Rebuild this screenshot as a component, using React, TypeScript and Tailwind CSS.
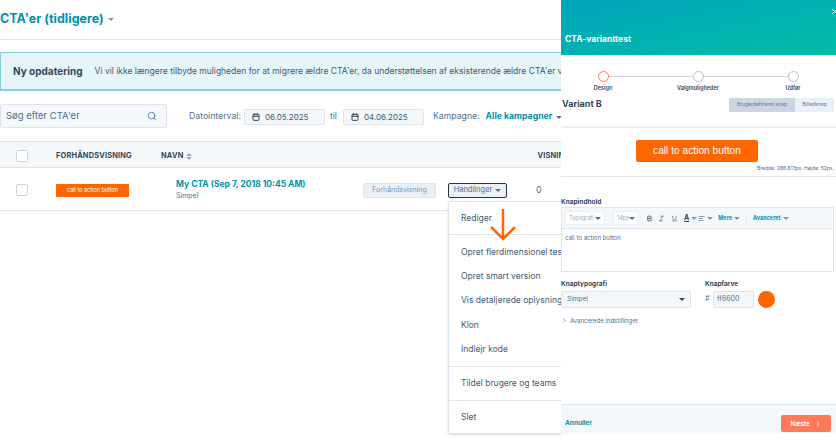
import React from 'react';
import { Search, Calendar, ChevronRight, X, Bold, Italic, Underline, AlignLeft } from 'lucide-react';

const Caret = ({ className = 'border-t-[#516f90]' }: { className?: string }) => (
  <span className={`inline-block w-0 h-0 border-x-[3px] border-x-transparent border-t-[3px] ${className}`}></span>
);

const DateField = ({ value }: { value: string }) => (
  <div className="w-[81px] h-[16px] shrink-0 flex items-center gap-[5px] pl-[7px] bg-[#f5f8fa] border border-[#dfe3eb] rounded-[2px]">
    <Calendar size={8} strokeWidth={3} className="text-[#33475b]" />
    <span className="text-[8px] text-[#425b76]">{value}</span>
  </div>
);

const menuItem = 'h-[24.25px] flex items-center pl-[12px] text-[8.5px] text-[#425b76] whitespace-nowrap';
const menuBlock = 'flex items-center pl-[12px] text-[8.5px] text-[#425b76]';

const ActionsMenu = () => (
  <div className="absolute left-[448px] top-[33px] w-[140px] h-[233px] bg-white border border-[#dfe3eb] shadow-sm">
    <div className={`${menuBlock} h-[33px] border-b border-[#dfe3eb]`}>Rediger</div>
    <div className="h-[132px] pt-[5px] border-b border-[#dfe3eb]">
      <div className={menuItem}>Opret flerdimensionel test</div>
      <div className={menuItem}>Opret smart version</div>
      <div className={menuItem}>Vis detaljerede oplysninger</div>
      <div className={menuItem}>Klon</div>
      <div className={menuItem}>Indlejr kode</div>
    </div>
    <div className={`${menuBlock} h-[34px] border-b border-[#dfe3eb]`}>Tildel brugere og teams</div>
    <div className={`${menuBlock} h-[33px]`}>Slet</div>
  </div>
);

const LeftPage = () => (
  <div className="relative w-[561px] shrink-0 overflow-hidden">
    <div className="h-[40px] flex items-center gap-[4px] border-b border-[#dfe3eb]">
      <h1 className="text-[12.5px] font-bold text-[#0091ae]">CTA&apos;er (tidligere)</h1>
      <Caret className="border-t-[#7c98b6]" />
    </div>

    <div className="mt-[12px] w-[600px] h-[39px] flex items-center gap-[12px] pl-[12px] bg-[#e5f5f8] border border-[#7fd1de] border-b-2 whitespace-nowrap">
      <span className="text-[10px] font-bold text-[#33475b]">Ny opdatering</span>
      <span className="text-[8.5px] text-[#425b76]">Vi vil ikke længere tilbyde muligheden for at migrere ældre CTA&apos;er, da understøttelsen af eksisterende ældre CTA&apos;er vil</span>
    </div>

    <div className="mt-[13px] h-[24px] flex items-center whitespace-nowrap">
      <div className="w-[167px] h-[24px] shrink-0 flex items-center justify-between pl-[5px] pr-[3px] bg-[#f5f8fa] border border-[#dfe3eb] rounded-[2px]">
        <span className="text-[9.5px] text-[#516f90]">Søg efter CTA&apos;er</span>
        <Search size={10} className="mr-[6px] text-[#516f90]" />
      </div>
      <div className="pt-[2px] flex items-center">
        <span className="ml-[22px] text-[8.7px] text-[#516f90]">Datointerval:</span>
        <div className="ml-[3px]"><DateField value="06.05.2025" /></div>
        <span className="ml-[5px] mr-[6px] text-[8.7px] text-[#516f90]">til</span>
        <DateField value="04.06.2025" />
        <span className="ml-[9px] text-[8.7px] text-[#516f90]">Kampagne:</span>
        <span className="ml-[6px] text-[8.7px] font-bold text-[#0091ae]">Alle kampagner</span>
        <span className="ml-[4px] flex"><Caret /></span>
      </div>
    </div>

    <div className="mt-[13px] w-[600px] h-[27px] pt-[3px] flex items-center bg-[#f5f8fa] border-y border-[#dfe3eb] text-[7.4px] font-bold tracking-wide text-[#33475b] whitespace-nowrap">
      <span className="ml-[16px] w-[12px] h-[12px] shrink-0 bg-white border border-[#cbd6e2] rounded-[2px]"></span>
      <span className="ml-[28px] w-[105px] shrink-0">FORHÅNDSVISNING</span>
      <span>NAVN</span>
      <span className="ml-[3px] flex flex-col gap-[1px]">
        <Caret className="rotate-180 border-t-[#99acc2]" />
        <Caret className="border-t-[#99acc2]" />
      </span>
      <span className="ml-[345px]">VISNINGER</span>
    </div>

    <div className="relative h-[43px] pt-[2px] flex items-center border-b border-[#dfe3eb] whitespace-nowrap">
      <span className="ml-[16px] w-[12px] h-[12px] shrink-0 bg-white border border-[#cbd6e2] rounded-[2px]"></span>
      <div className="ml-[28px] w-[73px] h-[13px] flex items-center justify-center bg-[#ff6600] rounded-[1px] text-[5.5px] text-white">call to action button</div>
      <div className="ml-[47px] w-[187px]">
        <div className="text-[8.5px] font-bold text-[#0091ae]">My CTA (Sep 7, 2018 10:45 AM)</div>
        <div className="text-[7px] text-[#516f90]">Simpel</div>
      </div>
      <div className="w-[73px] h-[15px] flex items-center justify-center bg-[#eaf0f6] border border-[#dfe3eb] rounded-[2px] text-[7px] text-[#7c98b6]">Forhåndsvisning</div>
      <div className="ml-[12px] w-[59px] h-[15px] flex items-center justify-center gap-[3px] bg-[#eaf0f6] border-[1.5px] border-[#253342] rounded-[2px] text-[7.5px] text-[#516f90]">
        Handlinger <Caret />
      </div>
      <span className="ml-[29px] text-[9px] text-[#516f90]">0</span>
      <ActionsMenu />
    </div>

    <svg className="absolute left-[489px] top-[208px]" width="28" height="34" viewBox="0 0 28 34" fill="none" stroke="#ff6600" strokeWidth="2.5">
      <path d="M14 1V31M2 19L14 31L26 19" />
    </svg>
  </div>
);

const Step = ({ label, active }: { label: string; active?: boolean }) => (
  <div className="w-[70px] flex flex-col items-center gap-[2px]">
    <span className={`z-10 w-[11px] h-[11px] rounded-full bg-white border ${active ? 'border-[#ff7a59]' : 'border-[#b0c1d4]'}`}></span>
    <span className="text-[5.5px] font-semibold text-[#33475b]">{label}</span>
  </div>
);

const RightPanel = () => (
  <div className="w-[275px] shrink-0 flex flex-col h-[434px] bg-white overflow-hidden">
    <div className="relative h-[55px] shrink-0 flex items-end pb-[9px] pl-[4px] bg-gradient-to-br from-[#00a4bd] to-[#00bda5]">
      <span className="text-[8.5px] font-bold text-white">CTA-varianttest</span>
      <X size={9} className="absolute right-[-3px] top-[7px] text-white" />
    </div>

    <div className="relative mt-[16px] h-[24px] shrink-0 pl-[7px] pr-[8px] flex justify-between">
      <div className="absolute left-[42px] right-[43px] top-[5px] h-px bg-[#cbd6e2]"></div>
      <Step label="Design" active />
      <Step label="Valgmuligheder" />
      <Step label="Udfør" />
    </div>

    <div className="mt-[3px] h-[14px] shrink-0 flex items-start justify-between pr-[2px]">
      <span className="ml-[1px] text-[9px] leading-[11px] font-bold text-[#33475b]">Variant B</span>
      <div className="flex h-[14px] text-[5px] text-[#5f7c9b]">
        <span className="w-[66px] flex items-center justify-center bg-[#cbd6e2] rounded-l-[1px]">Brugerdefineret knap</span>
        <span className="w-[39px] flex items-center justify-center bg-[#eaf0f6] rounded-r-[1px]">Billedknap</span>
      </div>
    </div>

    <div className="mt-[14px] border-t-2 border-[#eaf0f6] h-[50px] shrink-0 flex flex-col items-center">
      <div className="mt-[12px] mr-[3px] w-[122px] h-[22px] flex items-center justify-center bg-[#ff6600] rounded-[2px] text-[10.2px] text-white font-['Liberation_Sans',sans-serif]">call to action button</div>
      <span className="self-end mt-[3px] mr-[2px] text-[5px] leading-[7px] text-[#516f90]">Bredde: 286,813px. Højde: 52px.</span>
    </div>
    <div className="h-px shrink-0 bg-[#dfe3eb]"></div>

    <div className="mt-[20px] text-[6.5px] leading-[10px] font-bold text-[#33475b]">Knapindhold</div>
    <div className="mr-[2px] h-[65px] shrink-0 border border-[#dfe3eb]">
      <div className="h-[21px] flex items-center pl-[3px] bg-[#f5f8fa] border-b border-[#dfe3eb] text-[5.5px] text-[#516f90]">
        <span className="w-[40px] h-[14px] flex items-center justify-between px-[3px] bg-white border border-[#eaf0f6] text-[#99acc2]">Typografi <Caret /></span>
        <span className="ml-[8px] w-[26px] h-[14px] flex items-center justify-between px-[3px] bg-white border border-[#eaf0f6] text-[#99acc2]">14px <Caret /></span>
        <Bold size={7} strokeWidth={3} className="ml-[7px] text-[#425b76]" />
        <Italic size={7} className="ml-[5px] text-[#425b76]" />
        <Underline size={7} className="ml-[6px] text-[#425b76]" />
        <span className="ml-[6px] font-bold text-[7px] leading-[7px] text-[#33475b] border-b border-[#33475b]">A</span>
        <span className="ml-[2px] flex"><Caret className="border-t-[#7c98b6]" /></span>
        <AlignLeft size={7} className="ml-[1px] text-[#425b76]" />
        <span className="ml-[2px] flex"><Caret className="border-t-[#7c98b6]" /></span>
        <span className="ml-[5px] font-bold text-[#0091ae]">Mere</span>
        <span className="ml-[2px] flex"><Caret className="border-t-[#7c98b6]" /></span>
        <span className="ml-[6px] pl-[6px] border-l border-[#dfe3eb] font-bold text-[#0091ae]">Avanceret</span>
        <span className="ml-[2px] flex"><Caret className="border-t-[#7c98b6]" /></span>
      </div>
      <div className="pl-[3px] pt-[4px] text-[6px] text-[#516f90]">call to action button</div>
    </div>

    <div className="mt-[7px] flex shrink-0">
      <div className="w-[144px]">
        <div className="text-[6.5px] leading-[10px] font-bold text-[#33475b]">Knaptypografi</div>
        <div className="mt-[2px] w-[130px] h-[17px] flex items-center justify-between px-[5px] bg-[#f5f8fa] border border-[#dfe3eb] rounded-[2px] text-[6.5px] text-[#516f90]">
          Simpel <Caret className="border-t-[#33475b]" />
        </div>
      </div>
      <div>
        <div className="text-[6.5px] leading-[10px] font-bold text-[#33475b]">Knapfarve</div>
        <div className="mt-[2px] flex items-center">
          <span className="w-[8px] text-[7px] text-[#516f90]">#</span>
          <span className="w-[41px] h-[17px] flex items-center pl-[3px] bg-[#f5f8fa] border border-[#dfe3eb] rounded-[2px] text-[7px] text-[#516f90]">ff6600</span>
          <span className="ml-[4px] w-[17px] h-[17px] rounded-full bg-[#ff6600]"></span>
        </div>
      </div>
    </div>

    <div className="mt-[8px] flex items-center gap-[2px] text-[6px] text-[#516f90]">
      <ChevronRight size={7} className="text-[#0091ae]" />
      Avancerede indstillinger
    </div>

    <div className="mt-auto h-[30px] shrink-0 pt-[8px] flex items-center justify-between pl-[4px] pr-[5px] bg-[#f5f8fa] border-t border-[#dfe3eb]">
      <span className="text-[6.5px] font-bold text-[#0091ae]">Annuller</span>
      <span className="w-[50px] h-[17px] flex items-center justify-center gap-[4px] bg-[#ff7a59] rounded-[2px] text-[6px] font-bold text-white">
        Næste <ChevronRight size={8} />
      </span>
    </div>
  </div>
);

export default function App() {
  return (
    <div className="w-[836px] h-[442px] flex overflow-hidden bg-white font-['Inter','Noto_Sans',sans-serif]">
      <LeftPage />
      <RightPanel />
    </div>
  );
}
